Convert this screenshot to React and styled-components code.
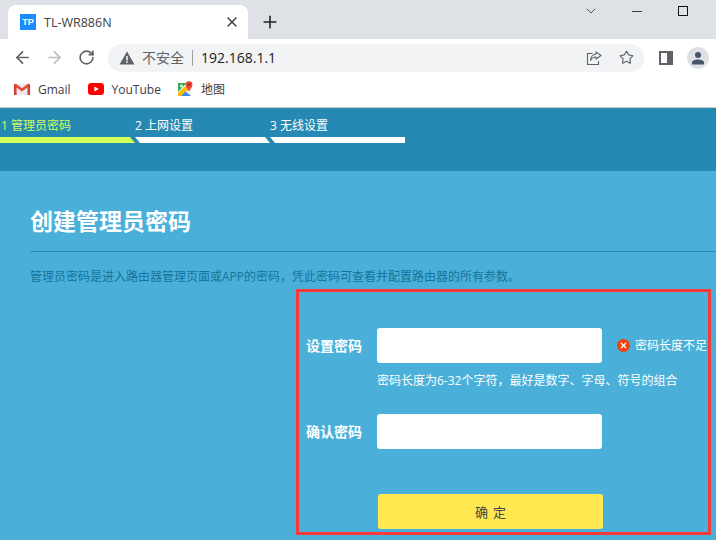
import styled, { createGlobalStyle } from 'styled-components';
import { ArrowLeft, ArrowRight, RotateCw, Star, X, Plus, ChevronDown, Minus } from 'lucide-react';

const GlobalStyle = createGlobalStyle`
  * { box-sizing: border-box; }
  html, body {
    margin: 0;
    padding: 0;
    height: 540px;
    overflow: hidden;
    background: #4ab0d9;
    font-family: "Open Sans", "Noto Sans CJK SC", sans-serif;
  }
`;

const Page = styled.div`
  width: 716px;
  height: 540px;
  overflow: hidden;
  display: flex;
  flex-direction: column;
`;

// Browser chrome
const TabStrip = styled.div`
  height: 39px;
  flex: none;
  background: #dee1e6;
  display: flex;
  align-items: flex-end;
  padding-left: 8px;
`;

const Tab = styled.div`
  width: 240px;
  height: 34px;
  background: #fff;
  border-radius: 8px 8px 0 0;
  display: flex;
  align-items: center;
  padding: 0 8px 0 12px;
  color: #3c4043;
  font-size: 12.5px;
`;

const Favicon = styled.span`
  width: 16px;
  height: 16px;
  background: #1a8cff;
  color: #fff;
  font: bold 9px/16px "Liberation Sans", sans-serif;
  text-align: center;
  flex: none;
  margin-right: 8px;
`;

const TabTitle = styled.span`
  flex: 1;
`;

const NewTab = styled.div`
  width: 40px;
  height: 34px;
  display: flex;
  align-items: center;
  justify-content: center;
  color: #202124;
  margin-left: 2px;
`;

const WindowControls = styled.div`
  margin-left: auto;
  height: 39px;
  display: flex;
  align-items: flex-start;
  padding: 3px 25px 0 0;
  gap: 30px;
  color: #111;
`;

const WindowButton = styled.div`
  width: 16px;
  height: 16px;
  display: flex;
  align-items: center;
  justify-content: center;
`;

const MaximizeBox = styled.span`
  width: 10px;
  height: 10px;
  border: 1px solid #111;
`;

const Toolbar = styled.div`
  height: 37px;
  flex: none;
  background: #fff;
  display: flex;
  align-items: center;
  padding: 0 7px 0 11px;
`;

const NavButton = styled.div`
  width: 22px;
  height: 22px;
  margin-right: 10px;
  display: flex;
  align-items: center;
  justify-content: center;
  color: ${props => (props.$disabled ? '#bcbec1' : '#5f6368')};
`;

const Omnibox = styled.div`
  width: 536px;
  height: 28px;
  margin-left: 1px;
  background: #f1f3f4;
  border-radius: 14px;
  display: flex;
  align-items: center;
  padding: 0 8px 0 11px;
`;

const NotSecure = styled.span`
  font-size: 14px;
  color: #5f6368;
  margin-left: 7px;
  padding-right: 8px;
  border-right: 1px solid #9aa0a6;
  line-height: 16px;
`;

const Url = styled.span`
  font-size: 14px;
  color: #202124;
  margin-left: 8px;
  flex: 1;
`;

const OmniIcon = styled.div`
  width: 20px;
  height: 20px;
  margin-left: 12px;
  display: flex;
  align-items: center;
  justify-content: center;
  color: #5f6368;
`;

const SidePanelIcon = styled.div`
  width: 14px;
  height: 14px;
  margin-left: 15px;
  border: 2px solid #5f6368;
  border-right-width: 6px;
  background: #fff;
  flex: none;
`;

const Avatar = styled.div`
  width: 22px;
  height: 22px;
  margin-left: 14px;
  border-radius: 50%;
  background: #dee1e6;
  flex: none;
  display: flex;
  align-items: center;
  justify-content: center;
`;

const BookmarkBar = styled.div`
  height: 32px;
  flex: none;
  background: #fff;
  border-bottom: 1px solid #ccc;
  display: flex;
  align-items: center;
  padding: 0 0 5px 14px;
  gap: 17px;
`;

const Bookmark = styled.div`
  display: flex;
  align-items: center;
  gap: 8px;
  font-size: 12px;
  color: #3c4043;
`;

// Router page
const StepHeader = styled.div`
  height: 63px;
  flex: none;
  background: #2589b4;
  display: flex;
  align-items: flex-start;
`;

const Step = styled.div`
  width: 135px;
  padding-top: 9px;
  color: ${props => (props.$active ? '#d4ff5a' : '#fff')};
  font-size: 12px;
  line-height: 17px;
`;

const StepLabel = styled.div`
  padding-left: ${props => (props.$first ? '1px' : '0')};
  height: 20px;
`;

const StepBar = styled.div`
  height: 6px;
  background: ${props => (props.$active ? '#d4ff5a' : '#fff')};
  clip-path: ${props =>
    props.$first
      ? 'polygon(0 0, 130px 0, 135px 100%, 0 100%)'
      : props.$last
        ? 'polygon(0 0, 100% 0, 100% 100%, 5px 100%)'
        : 'polygon(0 0, 130px 0, 135px 100%, 5px 100%)'};
`;

const Content = styled.div`
  flex: 1;
  background: #4ab0d9;
  display: flex;
  flex-direction: column;
  padding-top: 34px;
`;

const Title = styled.h1`
  margin: 0 0 0 30px;
  height: 46px;
  font-size: 23px;
  line-height: 32px;
  font-weight: 700;
  color: #fff;
`;

const Intro = styled.p`
  margin: 0 0 0 30px;
  border-top: 1px solid #2b8bb5;
  padding-top: 16px;
  height: 38px;
  font-size: 12px;
  line-height: 18px;
  color: #17739b;
  white-space: nowrap;
`;

const FormPanel = styled.form`
  margin-left: 296px;
  width: 415px;
  height: 246px;
  border: 3px solid #f83a3a;
  padding: 36px 0 0 7px;
  display: flex;
  flex-direction: column;
`;

const FieldRow = styled.div`
  display: flex;
  align-items: center;
  height: 35px;
`;

const FieldLabel = styled.label`
  width: 71px;
  flex: none;
  padding-bottom: 2px;
  font-size: 14px;
  font-weight: 700;
  color: #fff;
`;

const TextInput = styled.input`
  width: 225px;
  height: 35px;
  border: none;
  border-radius: 3px;
  background: #fff;
  outline: none;
`;

const ErrorTip = styled.div`
  display: flex;
  align-items: center;
  gap: 5px;
  margin-left: 15px;
  padding-bottom: 1px;
  font-size: 12px;
  color: #fff;
  white-space: nowrap;
`;

const ErrorDot = styled.span`
  width: 13px;
  height: 13px;
  border-radius: 50%;
  background: #f0400f;
  color: #fff;
  display: flex;
  align-items: center;
  justify-content: center;
`;

const Hint = styled.div`
  margin: 9px 0 0 71px;
  height: 42px;
  font-size: 12px;
  line-height: 18px;
  color: #fff;
`;

const SubmitButton = styled.button`
  width: 225px;
  height: 35px;
  margin: 45px 0 0 72px;
  border: none;
  border-radius: 3px;
  background: #ffe850;
  color: #444;
  font-family: inherit;
  font-size: 13px;
  letter-spacing: 5px;
  text-indent: 5px;
`;

function ShareIcon() {
  return (
    <svg width="16" height="16" viewBox="0 0 16 16" fill="none" stroke="currentColor" strokeWidth="1.1">
      <path d="M6.5 3.5H1.5V14.5H12.5V11" />
      <path d="M10 2L15 5.5L10 9V7C7.5 7 5.5 8 4.5 10.5C4.5 7.5 6.5 4.5 10 4Z" strokeLinejoin="round" />
    </svg>
  );
}

function WarningIcon() {
  return (
    <svg width="16" height="14" viewBox="0 0 16 14">
      <path d="M8 0.5L15.5 13.5H0.5Z" fill="#5f6368" />
      <rect x="7.2" y="5" width="1.6" height="4.5" fill="#f1f3f4" />
      <rect x="7.2" y="10.3" width="1.6" height="1.6" fill="#f1f3f4" />
    </svg>
  );
}

function GmailIcon() {
  return (
    <svg width="16" height="12" viewBox="0 0 16 12">
      <path d="M2 1H14V12H2Z" fill="#ececec" />
      <path d="M0 1.5V12H2.6V4.6L8 8.6L13.4 4.6V12H16V1.5L14.4 0.4L8 5.2L1.6 0.4Z" fill="#e8483c" />
      <path d="M0 1.5V12H1.2V2.2Z" fill="#c5392d" />
      <path d="M16 1.5V12H14.8V2.2Z" fill="#c5392d" />
    </svg>
  );
}

function YoutubeIcon() {
  return (
    <svg width="16" height="12" viewBox="0 0 16 12">
      <rect width="16" height="12" rx="3.2" fill="#f00" />
      <path d="M6.4 3.4L10.8 6L6.4 8.6Z" fill="#fff" />
    </svg>
  );
}

function MapsIcon() {
  return (
    <svg width="15" height="16" viewBox="0 0 15 16">
      <path d="M0 2H9L0 11Z" fill="#34a853" />
      <path d="M0 11L9 2H13V15H0Z" fill="#f1f3f4" />
      <path d="M0 15V11.5L10 3L12 7L3 15Z" fill="#fbbc04" />
      <path d="M3 15L7.5 10.5L13 15Z" fill="#4285f4" />
      <circle cx="3.5" cy="5" r="1.6" fill="#d7f0dc" />
      <circle cx="11" cy="3.6" r="3.4" fill="#ea4335" />
      <path d="M8 5.4L11 10.5L14 5.4Z" fill="#ea4335" />
      <circle cx="11" cy="3.6" r="1.1" fill="#8d2a20" />
    </svg>
  );
}

function AvatarIcon() {
  return (
    <svg width="14" height="14" viewBox="0 0 14 14" fill="#47546a">
      <circle cx="7" cy="4" r="3" />
      <path d="M1 13.5V11.5C1 9.5 4 8.5 7 8.5C10 8.5 13 9.5 13 11.5V13.5Z" />
    </svg>
  );
}

const steps = ['1 管理员密码', '2 上网设置', '3 无线设置'];

export default function App() {
  return (
    <Page>
      <GlobalStyle />
      <TabStrip>
        <Tab>
          <Favicon>TP</Favicon>
          <TabTitle>TL-WR886N</TabTitle>
          <X size={16} color="#3c4043" strokeWidth={2.2} />
        </Tab>
        <NewTab>
          <Plus size={20} strokeWidth={1.9} />
        </NewTab>
        <WindowControls>
          <WindowButton><ChevronDown size={20} strokeWidth={1} /></WindowButton>
          <WindowButton><Minus size={17} strokeWidth={1.2} /></WindowButton>
          <WindowButton><MaximizeBox /></WindowButton>
        </WindowControls>
      </TabStrip>
      <Toolbar>
        <NavButton><ArrowLeft size={19} strokeWidth={2.2} /></NavButton>
        <NavButton $disabled><ArrowRight size={19} strokeWidth={2.2} /></NavButton>
        <NavButton><RotateCw size={17} strokeWidth={2.4} /></NavButton>
        <Omnibox>
          <WarningIcon />
          <NotSecure>不安全</NotSecure>
          <Url>192.168.1.1</Url>
          <OmniIcon><ShareIcon /></OmniIcon>
          <OmniIcon><Star size={15} strokeWidth={1.8} /></OmniIcon>
        </Omnibox>
        <SidePanelIcon />
        <Avatar><AvatarIcon /></Avatar>
      </Toolbar>
      <BookmarkBar>
        <Bookmark><GmailIcon />Gmail</Bookmark>
        <Bookmark><YoutubeIcon />YouTube</Bookmark>
        <Bookmark><MapsIcon />地图</Bookmark>
      </BookmarkBar>
      <StepHeader>
        {steps.map((label, i) => (
          <Step key={label} $active={i === 0}>
            <StepLabel $first={i === 0}>{label}</StepLabel>
            <StepBar $active={i === 0} $first={i === 0} $last={i === steps.length - 1} />
          </Step>
        ))}
      </StepHeader>
      <Content>
        <Title>创建管理员密码</Title>
        <Intro>管理员密码是进入路由器管理页面或APP的密码，凭此密码可查看并配置路由器的所有参数。</Intro>
        <FormPanel>
          <FieldRow>
            <FieldLabel>设置密码</FieldLabel>
            <TextInput type="password" />
            <ErrorTip>
              <ErrorDot><X size={9} strokeWidth={3.5} /></ErrorDot>
              密码长度不足
            </ErrorTip>
          </FieldRow>
          <Hint>密码长度为6-32个字符，最好是数字、字母、符号的组合</Hint>
          <FieldRow>
            <FieldLabel>确认密码</FieldLabel>
            <TextInput type="password" />
          </FieldRow>
          <SubmitButton type="button">确定</SubmitButton>
        </FormPanel>
      </Content>
    </Page>
  );
}
